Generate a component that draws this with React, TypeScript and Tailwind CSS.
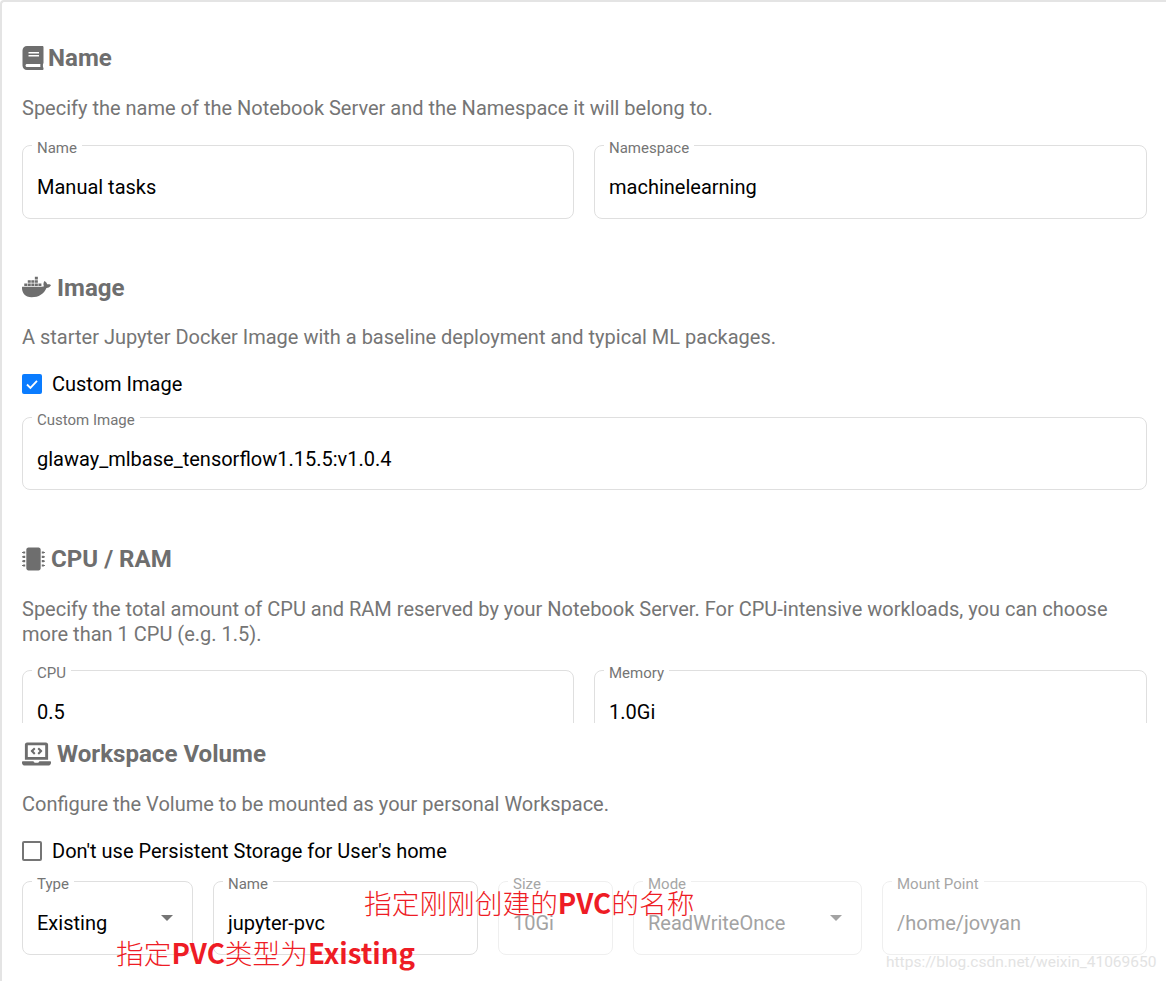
import React from "react";
import { FaBook, FaDocker, FaMicrochip, FaLaptopCode } from "react-icons/fa";

function Field({ label, value, select, disabled, className = "", short }: { label: string; value: string; select?: boolean; disabled?: boolean; className?: string; short?: boolean }) {
  return (
    <fieldset className={`relative rounded-[8px] border pl-[14px] pr-[14px] ${short ? "h-[80px]" : "h-[81px]"} ${disabled ? "border-[#efefef]" : "border-[#dfdfdf]"} ${className}`}>
      <legend className={`ml-[-5px] px-[5px] h-[14px] text-[15px] leading-[20px] ${disabled ? "text-[#a6a6a6]" : "text-[#757575]"}`}>{label}</legend>
      <div className={`mt-[21px] text-[20px] leading-[28px] whitespace-nowrap ${disabled ? "text-[#a3a3a3]" : "text-black"}`}>{value}</div>
      {select && (
        <div className={`absolute right-[19px] top-[27px] h-0 w-0 border-x-[6px] border-t-[6px] border-x-transparent ${disabled ? "border-t-[#a3a3a3]" : "border-t-[#757575]"}`} />
      )}
    </fieldset>
  );
}

function Heading({ icon, text, gap }: { icon: React.ReactNode; text: string; gap: string }) {
  return (
    <div className={`flex h-[30px] items-center text-[#6e6e6e] ${gap}`}>
      {icon}
      <h2 className="text-[24.1px] font-bold leading-[30px]">{text}</h2>
    </div>
  );
}

function Desc({ children }: { children: React.ReactNode }) {
  return <p className="text-[20px] leading-[25px] text-[#757575]">{children}</p>;
}

function Check({ checked, label }: { checked?: boolean; label: string }) {
  return (
    <div className="flex h-[20px] items-center gap-[10px]">
      {checked ? (
        <span className="flex h-[20px] w-[20px] items-center justify-center rounded-[2px] bg-[#0a7cff]">
          <svg width="14" height="14" viewBox="0 0 14 14" fill="none" stroke="white" strokeWidth="1.8">
            <path d="M2 7.5l3.4 3.4L12 3.8" />
          </svg>
        </span>
      ) : (
        <span className="h-[20px] w-[20px] rounded-[2px] border-2 border-[#757575]" />
      )}
      <span className="text-[20px] leading-[25px] text-black">{label}</span>
    </div>
  );
}

export default function App() {
  return (
    <div className="relative h-[981px] w-[1166px] overflow-hidden bg-white font-['Roboto',sans-serif]">
      <div className="h-[981px] rounded-tl-[4px] border-l-2 border-t-2 border-[#e4e4e4] pl-[20px] pr-[19px]">
        <div className="h-[721px] overflow-hidden">
          <div className="pt-[41px]">
            <Heading gap="gap-[4px]" text="Name" icon={<FaBook className="h-[24px] w-[22px]" />} />
          </div>
          <div className="mt-[23px]"><Desc>Specify the name of the Notebook Server and the Namespace it will belong to.</Desc></div>
          <div className="mt-[17px] grid grid-cols-[552px_553px] gap-[20px]">
            <Field label="Name" value="Manual tasks" />
            <Field label="Namespace" value="machinelearning" />
          </div>
          <div className="mt-[54px]">
            <Heading gap="gap-[6px]" text="Image" icon={<FaDocker className="-mt-[2px] h-[24px] w-[29px]" />} />
          </div>
          <div className="mt-[22px]"><Desc>A starter Jupyter Docker Image with a baseline deployment and typical ML packages.</Desc></div>
          <div className="mt-[24px]"><Check checked label="Custom Image" /></div>
          <div className="mt-[16px]"><Field short label="Custom Image" value="glaway_mlbase_tensorflow1.15.5:v1.0.4" /></div>
          <div className="mt-[54px]">
            <Heading gap="gap-[6px]" text="CPU / RAM" icon={<FaMicrochip className="h-[24px] w-[23px]" />} />
          </div>
          <div className="mt-[23px]"><Desc>Specify the total amount of CPU and RAM reserved by your Notebook Server. For CPU-intensive workloads, you can choose more than 1 CPU (e.g. 1.5).</Desc></div>
          <div className="mt-[16px] grid grid-cols-[552px_553px] gap-[20px]">
            <Field label="CPU" value="0.5" />
            <Field label="Memory" value="1.0Gi" />
          </div>
        </div>
        <div className="pt-[16px]">
          <Heading gap="gap-[6px]" text="Workspace Volume" icon={<FaLaptopCode className="h-[24px] w-[29px]" />} />
        </div>
        <div className="mt-[23px]"><Desc>Configure the Volume to be mounted as your personal Workspace.</Desc></div>
        <div className="mt-[24px]"><Check label="Don't use Persistent Storage for User's home" /></div>
        <div className="mt-[13px] flex gap-[20px]">
          <Field className="w-[171px]" label="Type" value="Existing" select />
          <Field className="w-[265px]" label="Name" value="jupyter-pvc" />
          <Field className="w-[115px]" disabled label="Size" value="10Gi" />
          <Field className="w-[229px]" disabled label="Mode" value="ReadWriteOnce" select />
          <Field className="w-[265px]" disabled label="Mount Point" value="/home/jovyan" />
        </div>
      </div>
      <div className="absolute left-[364px] top-[885px] whitespace-nowrap font-['Noto_Sans_CJK_SC',sans-serif] text-[27.7px] font-light leading-[34px] text-[#ee1c25]">
        指定刚刚创建的<b className="font-bold">PVC</b>的名称
      </div>
      <div className="absolute left-[116px] top-[935px] whitespace-nowrap font-['Noto_Sans_CJK_SC',sans-serif] text-[27.7px] font-light leading-[34px] text-[#ee1c25]">
        指定<b className="font-bold">PVC</b>类型为<b className="font-bold">Existing</b>
      </div>
      <div className="absolute left-[886px] top-[951px] whitespace-nowrap text-[15.5px] leading-[22px] text-[#e3e3e3]">
        https://blog.csdn.net/weixin_41069650
      </div>
    </div>
  );
}
